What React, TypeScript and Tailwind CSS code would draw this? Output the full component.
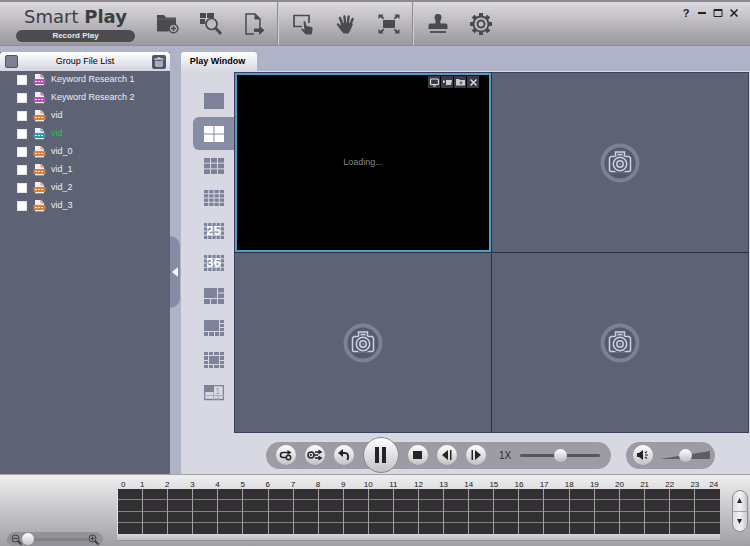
import React from "react";

const INK = "#4b4a4f";

type IconProps = { children: React.ReactNode; w?: number; h?: number; box?: string };

function Icon({ children, w = 24, h = 24, box }: IconProps) {
  return (
    <svg width={w} height={h} viewBox={box ?? `0 0 ${w} ${h}`} fill="none" aria-hidden="true" className="shrink-0">
      {children}
    </svg>
  );
}

const FolderAdd = () => (
  <Icon>
    <path d="M1 3h7l2 2.500h10v8.500a6 6 0 0 0-7.500 5.500H1z" fill={INK} />
    <path d="M1 7h19" stroke="#66656a" />
    <circle cx="17.500" cy="16.500" r="4.300" stroke={INK} strokeWidth="1.600" fill="#b5b4b8" />
    <path d="M17.500 14v5M15 16.500h5" stroke={INK} strokeWidth="1.600" />
  </Icon>
);

const GridSearch = () => (
  <Icon>
    <path d="M1 1h6v5H1zM8 1h7v5H8zM1 7h5v5H1z" fill={INK} />
    <circle cx="12.500" cy="12" r="5.500" stroke={INK} strokeWidth="1.700" fill="#bdbcc0" />
    <path d="M16.500 16l5.500 6" stroke={INK} strokeWidth="3" />
  </Icon>
);

const ExportFile = () => (
  <Icon>
    <path d="M18 14V7l-5-5H4v20h8" stroke={INK} strokeWidth="1.500" />
    <path d="M12.500 2v5.500H18z" fill={INK} />
    <path d="M12 16.500h5V13.500l5.500 4.800-5.500 4.700V20h-5z" fill={INK} />
  </Icon>
);

const SelectArea = () => (
  <Icon>
    <path d="M11 14.500H3v-11h15V11" stroke={INK} strokeWidth="1.700" />
    <path d="M12.500 9.500c1.200-.8 2 0 2.200 1l.7 3.500 5 1c1.300.3 1.300 1.500 1.100 3l-.8 4.500h-6L10.500 18c-.6-1 .8-1.800 1.700-1l1.300 1z" fill={INK} />
  </Icon>
);

const Hand = () => (
  <Icon>
    <g stroke={INK} strokeWidth="2.400" strokeLinecap="round">
      <path d="M8.500 13L6 6M11 12l-.5-7.500M13.500 12l1.200-7.500M16 13l2.700-6M8 17l-4-4.500" />
    </g>
    <path d="M7 11h10l2 1-2.500 6-2 3.500H9.500L4.500 15l2-1z" fill={INK} />
  </Icon>
);

const FullView = () => (
  <Icon>
    <path d="M6 8h12v8H6z" fill={INK} />
    <path d="M1.500 2.500h5L5.300 3.900 7.300 6 6 7.200 3.500 5.200 1.500 7zM22.500 2.500h-5l1.200 1.400-2 2.100L18 7.200l2.500-2 2 1.800zM1.500 21.500h5l-1.200-1.400L7.300 18 6 16.800l-2.500 2L1.500 17zM22.500 21.500h-5l1.200-1.400-2-2.100 1.300-1.200 2.500 2 2-1.800z" fill={INK} />
  </Icon>
);

const Stamp = () => (
  <Icon>
    <path d="M8.500 5C8.500 3 10 2 12 2s3.500 1 3.500 3c0 2.500-1.500 3-1 6.500h5c1.200 0 2 1 2 2V17h-19v-3.500c0-1 .8-2 2-2h5c.5-3.500-1-4-1-6.500z" fill={INK} />
    <path d="M4 20h16" stroke={INK} strokeWidth="1.800" />
  </Icon>
);

const Gear = () => (
  <Icon>
    <g stroke={INK} strokeWidth="4">
      <path d="M12 1v4M12 19v4M1 12h4M19 12h4M4.200 4.200L7 7M17 17l2.800 2.800M4.200 19.800L7 17M17 7l2.800-2.800" />
    </g>
    <circle cx="12" cy="12" r="7.500" stroke={INK} strokeWidth="1.900" fill="#bcbbbf" />
    <circle cx="12" cy="12" r="3.500" stroke={INK} strokeWidth="2" />
  </Icon>
);

const toolGroups = [
  [
    { name: "Add folder", icon: <FolderAdd /> },
    { name: "Search recordings", icon: <GridSearch /> },
    { name: "Export file", icon: <ExportFile /> },
  ],
  [
    { name: "Select area", icon: <SelectArea /> },
    { name: "Pan", icon: <Hand /> },
    { name: "Full view", icon: <FullView /> },
  ],
  [
    { name: "Watermark", icon: <Stamp /> },
    { name: "Settings", icon: <Gear /> },
  ],
];

const windowControls = [
  { name: "Help", icon: <span className="text-[11px] leading-3 font-bold">?</span> },
  { name: "Minimize", icon: <Icon w={10} h={10}><path d="M1 5h8" stroke="#222" strokeWidth="2" /></Icon> },
  { name: "Maximize", icon: <Icon w={10} h={10}><path d="M1 1.500h8v7H1z" stroke="#222" /><path d="M1 2h8" stroke="#222" strokeWidth="2" /></Icon> },
  { name: "Close", icon: <Icon w={10} h={10}><path d="M1.500 1.500l7 7M8.500 1.500l-7 7" stroke="#222" strokeWidth="1.600" /></Icon> },
];

function TitleBar() {
  return (
    <header className="flex h-[46px] shrink-0 items-center border-t-2 border-b border-t-[#8d8b91] border-b-[#918f97] bg-linear-to-b from-[#dcdade] to-[#9a989d]">
      <div className="ml-4 w-[119px] shrink-0">
        <h1 className="text-center font-['DejaVu_Sans',sans-serif] text-lg leading-[22px] whitespace-nowrap text-[#3e3d42]">
          Smart <b>Play</b>
        </h1>
        <p className="mt-[2px] h-3 rounded-full bg-[#4c4b50] text-center text-[8px] leading-3 font-bold text-[#e8e8ea]">Record Play</p>
      </div>
      <nav aria-label="Tools" className="ml-[11px] flex self-stretch">
        {toolGroups.map((group, i) => (
          <div key={i} className="flex">
            {i > 0 && <div className="mx-[2px] w-[2px] border-l border-[#8f8d92] bg-[#d0cfd3]" />}
            {group.map((tool) => (
              <button key={tool.name} type="button" aria-label={tool.name} className="flex w-[43px] items-center justify-center">
                {tool.icon}
              </button>
            ))}
          </div>
        ))}
      </nav>
      <div className="mr-2 mb-[22px] ml-auto flex text-[#222]">
        {windowControls.map((c) => (
          <button key={c.name} type="button" aria-label={c.name} className="flex h-4 w-4 items-center justify-center">
            {c.icon}
          </button>
        ))}
      </div>
    </header>
  );
}

const files = [
  { name: "Keyword Research 1", color: "#b452b4" },
  { name: "Keyword Research 2", color: "#b452b4" },
  { name: "vid", color: "#d98236" },
  { name: "vid", color: "#2c9ab4", active: true },
  { name: "vid_0", color: "#d98236" },
  { name: "vid_1", color: "#d98236" },
  { name: "vid_2", color: "#d98236" },
  { name: "vid_3", color: "#d98236" },
];

function FileIcon({ color }: { color: string }) {
  return (
    <Icon w={13} h={14}>
      <path d="M2 1h6l3 3v9H2z" fill="#f3eef3" />
      <path d="M8 1v3h3" stroke={color} />
      <path d="M0.500 6h12v5H.5z" fill={color} />
      <path d="M2 8.500h9" stroke="#f6e4f0" strokeDasharray="2 1" />
      <path d="M2 12.500h9" stroke={color} />
    </Icon>
  );
}

function FileList() {
  return (
    <aside className="mt-[6px] flex w-[170px] shrink-0 flex-col bg-[#5d6375]">
      <div className="flex h-[19px] items-center justify-between rounded-t-[3px] bg-linear-to-b from-white to-[#d3d4e0] pr-1 pl-[5px]">
        <input type="checkbox" aria-label="Select all files" className="h-[13px] w-[13px] appearance-none rounded-[2px] border border-[#4f5468] bg-[#7b8095]" />
        <h2 className="text-[9px] text-black">Group File List</h2>
        <button type="button" aria-label="Delete selected" className="flex h-[14px] w-[14px] items-center justify-center rounded-[2px] bg-[#4f5569]">
          <Icon w={10} h={10}>
            <path d="M.5 2h9M3.500 1h3" stroke="#fff" />
            <path d="M2 3.500v5.500h6V3.500M4 4v4M6 4v4" stroke="#fff" />
          </Icon>
        </button>
      </div>
      <ul>
        {files.map((f, i) => (
          <li key={i}>
            <label className="flex h-[18px] items-center pl-[17px] text-[9px]">
              <input type="checkbox" className="h-[10px] w-[10px] appearance-none border border-[#e4e6ec] bg-white" />
              <span className="mr-[5px] ml-[6px]">
                <FileIcon color={f.color} />
              </span>
              <span className={f.active ? "text-[#1fc83a]" : "text-[#eceef3]"}>{f.name}</span>
            </label>
          </li>
        ))}
      </ul>
    </aside>
  );
}

const CELL = "#7b829a";

function Cells({ cols, rows }: { cols: number; rows: number }) {
  const cw = (20 - (cols - 1)) / cols;
  const ch = (16 - (rows - 1)) / rows;
  return (
    <>
      {Array.from({ length: cols * rows }, (_, i) => (
        <rect key={i} x={(i % cols) * (cw + 1)} y={Math.floor(i / cols) * (ch + 1)} width={cw} height={ch} fill="currentColor" />
      ))}
    </>
  );
}

function CountCells({ n }: { n: number }) {
  return (
    <span className="relative flex items-center justify-center">
      <Icon w={20} h={16}>
        <Cells cols={5} rows={4} />
      </Icon>
      <span className="absolute text-[13px] leading-4 font-bold text-white">{n}</span>
    </span>
  );
}

const layouts = [
  { name: "1 window", icon: <Icon w={20} h={16}><Cells cols={1} rows={1} /></Icon> },
  { name: "4 windows", icon: <Icon w={20} h={16}><Cells cols={2} rows={2} /></Icon>, active: true },
  { name: "9 windows", icon: <Icon w={20} h={16}><Cells cols={3} rows={3} /></Icon> },
  { name: "16 windows", icon: <Icon w={20} h={16}><Cells cols={4} rows={4} /></Icon> },
  { name: "25 windows", icon: <CountCells n={25} /> },
  { name: "36 windows", icon: <CountCells n={36} /> },
  {
    name: "6 windows",
    icon: <Icon w={20} h={16}><path d="M0 0h13v10H0zM14 0h6v4.500h-6zM14 5.500h6V10h-6zM0 11h6v5H0zM7 11h6v5H7zM14 11h6v5h-6z" fill={CELL} /></Icon>,
  },
  {
    name: "8 windows",
    icon: <Icon w={20} h={16}><path d="M0 0h15v11H0zM16 0h4v3h-4zM16 4h4v3h-4zM16 8h4v3h-4zM0 12h4v4H0zM5 12h5v4H5zM11 12h4v4h-4zM16 12h4v4h-4z" fill={CELL} /></Icon>,
  },
  {
    name: "13 windows",
    icon: <Icon w={20} h={16}><path d="M0 0h4v3H0zM5 0h4v3H5zM10 0h5v3h-5zM16 0h4v3h-4zM0 4h4v4H0zM16 4h4v4h-4zM0 9h4v3H0zM16 9h4v3h-4zM0 13h4v3H0zM5 13h4v3H5zM10 13h5v3h-5zM16 13h4v3h-4zM5 4h10v8H5z" fill={CELL} /></Icon>,
  },
  {
    name: "Custom layout",
    icon: (
      <Icon w={20} h={16}>
        <path d="M.5.5h19v14H.5z" stroke={CELL} strokeWidth="1.500" />
        <path d="M0 10.500h20M9.500 7v8M14 10v5" stroke="#a9adbd" />
        <path d="M1 1h9v6H1z" fill={CELL} />
        <path d="M12 4l2-1v5M12 8.500h4" stroke="#a9adbd" />
      </Icon>
    ),
  },
];

function LayoutRail() {
  return (
    <div className="flex w-[53px] shrink-0 flex-col bg-[#d8d8e3] pt-[13px]">
      <div className="flex h-[324px] flex-col">
        {layouts.map((l) => (
          <button
            key={l.name}
            type="button"
            aria-label={l.name}
            className={`ml-3 flex flex-1 items-center justify-center rounded-l-md ${l.active ? "bg-[#868da5] text-white" : "text-[#7b829a]"}`}
          >
            {l.icon}
          </button>
        ))}
      </div>
    </div>
  );
}

function EmptyCell() {
  return (
    <div className="flex items-center justify-center bg-[#5d6375]">
      <Icon w={40} h={40}>
        <circle cx="20" cy="20" r="17.500" fill="#555b6e" stroke="#7b8196" strokeWidth="4" />
        <g stroke="#cdd2e2" strokeWidth="1.500" fill="#555b6e">
          <path d="M15.500 14V9h9v5" />
          <path d="M11 13.500h18l1.500 1.500v12.500l-1 1h-19l-1-1V15z" />
          <circle cx="20" cy="21" r="7.800" stroke="#555b6e" strokeWidth="2" />
          <circle cx="20" cy="21" r="6.700" />
          <circle cx="20" cy="21" r="3.200" />
        </g>
        <path d="M17.500 11.500h5" stroke="#cdd2e2" strokeWidth="1.500" />
        <circle cx="20" cy="21" r="1" fill="#8f96ac" />
      </Icon>
    </div>
  );
}

const cellActions = [
  { name: "Display", icon: <><rect x="1.500" y="2" width="8" height="5.500" rx="1" stroke="#ddd" strokeWidth="1.200" /><path d="M4 9h3" stroke="#ddd" /></> },
  { name: "Record", icon: <><path d="M4 3h6l-1 5H4z" fill="#ccc" /><path d="M1 3l2 1v1.500L1 6z" fill="#ccc" /></> },
  { name: "Snapshot", icon: <><path d="M1 2h3l1 1h5v5.500H1z" fill="#ccc" /><circle cx="6" cy="5.700" r="1.300" fill="#555" /></> },
  { name: "Close cell", icon: <path d="M2.500 2.500l6 6M8.500 2.500l-6 6" stroke="#ddd" strokeWidth="1.400" /> },
];

function VideoGrid() {
  return (
    <div className="grid min-w-0 flex-1 grid-cols-2 grid-rows-2 gap-px border border-[#39415a] bg-[#2b3040]">
      <div className="relative flex items-center justify-center border-2 border-[#4d9fc8] bg-black">
        <p className="text-[9px] text-[#85868b]">Loading...</p>
        <div className="absolute top-px right-[10px] flex gap-px">
          {cellActions.map((a) => (
            <button key={a.name} type="button" aria-label={a.name} className="flex h-3 w-3 items-center justify-center bg-[#3a3a46]">
              <Icon w={11} h={11}>{a.icon}</Icon>
            </button>
          ))}
        </div>
      </div>
      <EmptyCell />
      <EmptyCell />
      <EmptyCell />
    </div>
  );
}

const DARK = "#242428";

function RoundButton({ name, children, large }: { name: string; children: React.ReactNode; large?: boolean }) {
  return (
    <button
      type="button"
      aria-label={name}
      className={`flex shrink-0 items-center justify-center rounded-full bg-linear-to-b from-white to-[#c3c2c8] ${large ? "-my-1 h-9 w-9 border border-[#88878d]" : "h-5 w-5"}`}
    >
      {children}
    </button>
  );
}

function PlayerControls() {
  return (
    <div className="flex h-[41px] shrink-0 items-center justify-center gap-[15px] bg-[#d8d8e2] pb-px pt-1 pl-[50px]">
      <div className="flex h-[27px] items-center gap-[9px] rounded-full bg-[#9d9ba3] pr-[11px] pl-[10px]">
        <RoundButton name="Repeat">
          <Icon w={14} h={14}>
            <path d="M7 9.500H4a2.500 2.500 0 0 1 0-5h6" stroke={DARK} strokeWidth="1.600" />
            <path d="M8.500 2l4 2.500-4 2.500z" fill={DARK} />
            <circle cx="9.500" cy="9.500" r="2.200" stroke={DARK} strokeWidth="1.400" />
          </Icon>
        </RoundButton>
        <RoundButton name="Sync play">
          <Icon w={16} h={14}>
            <circle cx="4" cy="7" r="3" stroke={DARK} strokeWidth="1.500" />
            <path d="M3 5.500L5.500 7 3 8.500zM11.500 1.500l4 2.500-4 2.500zM11.500 7.500l4 2.500-4 2.500z" fill={DARK} />
            <path d="M8 4h4M8 10h4M7 7h4" stroke={DARK} strokeWidth="1.500" />
          </Icon>
        </RoundButton>
        <RoundButton name="Reverse play">
          <Icon w={14} h={14}>
            <path d="M5 5h3c3 0 4 3 2.500 7" stroke={DARK} strokeWidth="2" />
            <path d="M1 5l5-4v8z" fill={DARK} />
          </Icon>
        </RoundButton>
        <RoundButton name="Pause" large>
          <Icon w={13} h={16}>
            <path d="M1 0h4v16H1zM8 0h4v16H8z" fill={DARK} />
          </Icon>
        </RoundButton>
        <RoundButton name="Stop">
          <Icon w={9} h={8}>
            <path d="M0 0h9v8H0z" fill={DARK} />
          </Icon>
        </RoundButton>
        <RoundButton name="Previous frame">
          <Icon w={12} h={10}>
            <path d="M7 0v10L1 5zM9 0h1.500v10H9z" fill={DARK} />
          </Icon>
        </RoundButton>
        <RoundButton name="Next frame">
          <Icon w={12} h={10}>
            <path d="M5 0v10l6-5zM1.500 0H3v10H1.500z" fill={DARK} />
          </Icon>
        </RoundButton>
        <label htmlFor="speed" className="ml-1 text-[10px] text-[#2c2b30]">
          1X
        </label>
        <input
          id="speed"
          type="range"
          defaultValue={50}
          className="h-[3px] w-20 appearance-none rounded-full bg-[#57565d] [&::-webkit-slider-thumb]:h-[13px] [&::-webkit-slider-thumb]:w-[13px] [&::-webkit-slider-thumb]:appearance-none [&::-webkit-slider-thumb]:rounded-full [&::-webkit-slider-thumb]:bg-linear-to-b [&::-webkit-slider-thumb]:from-white [&::-webkit-slider-thumb]:to-[#bcbbc2]"
        />
      </div>
      <div className="flex h-[27px] items-center gap-[7px] rounded-full bg-[#9d9ba3] pr-[5px] pl-[7px]">
        <RoundButton name="Mute">
          <Icon w={14} h={12}>
            <path d="M1 4h2l4-3v10L3 8H1z" fill={DARK} />
            <path d="M9 4l2-1.500M9 6h3M9 8l2 1.500" stroke={DARK} strokeWidth="1.200" />
          </Icon>
        </RoundButton>
        <div className="relative flex items-center">
          <Icon w={50} h={10}>
            <path d="M0 9L50 1v8z" fill="#5f5d66" />
          </Icon>
          <input
            type="range"
            aria-label="Volume"
            defaultValue={52}
            className="absolute inset-0 w-full appearance-none bg-transparent [&::-webkit-slider-thumb]:h-[13px] [&::-webkit-slider-thumb]:w-[13px] [&::-webkit-slider-thumb]:appearance-none [&::-webkit-slider-thumb]:rounded-full [&::-webkit-slider-thumb]:bg-linear-to-b [&::-webkit-slider-thumb]:from-white [&::-webkit-slider-thumb]:to-[#bcbbc2]"
          />
        </div>
      </div>
    </div>
  );
}

function ZoomIcon({ plus }: { plus?: boolean }) {
  return (
    <Icon w={11} h={11}>
      <circle cx="4.500" cy="4.500" r="3.500" stroke="#3a393e" />
      <path d={plus ? "M2.500 4.500h4M4.500 2.500v4" : "M2.500 4.500h4"} stroke="#3a393e" />
      <path d="M7 7l3.500 3.500" stroke="#3a393e" strokeWidth="1.800" />
    </Icon>
  );
}

const hours = Array.from({ length: 25 }, (_, i) => i);

function Timeline() {
  return (
    <footer className="flex h-[72px] shrink-0 border-t border-[#a3a2a8] bg-linear-to-b from-[#efeff0] to-[#a09fa4]">
      <div className="flex w-[117px] shrink-0 items-end">
        <div className="ml-[7px] flex h-[14px] w-24 items-center rounded-t-lg rounded-b-md bg-[#939298] px-1">
          <ZoomIcon />
          <input
            type="range"
            aria-label="Timeline zoom"
            defaultValue={0}
            className="h-[3px] min-w-0 flex-1 appearance-none bg-[#828188] [&::-webkit-slider-thumb]:h-3 [&::-webkit-slider-thumb]:w-3 [&::-webkit-slider-thumb]:appearance-none [&::-webkit-slider-thumb]:rounded-full [&::-webkit-slider-thumb]:bg-linear-to-b [&::-webkit-slider-thumb]:from-white [&::-webkit-slider-thumb]:to-[#c6c5cb]"
          />
          <ZoomIcon plus />
        </div>
      </div>
      <div className="flex min-w-0 flex-1 flex-col">
        <div className="mt-[5px] grid h-[9px] grid-cols-48 text-center text-[8px] leading-[10px] text-[#151515]">
          {hours.map((h) => (
            <span key={h} className={h === 0 || h === 24 ? "col-span-1" : "col-span-2"}>
              {h}
            </span>
          ))}
        </div>
        <div className="grid h-[45px] grid-cols-24 grid-rows-4 border-l border-[#e3e3e3] bg-[#323032]">
          {Array.from({ length: 96 }, (_, i) => (
            <div
              key={i}
              className={`${i % 24 < 23 ? "border-r border-r-[#a3a2a3]" : ""} ${i < 72 ? "border-b border-b-[#858485]" : ""}`}
            />
          ))}
        </div>
        <div className="h-[7px] border-b border-[#98979c] bg-linear-to-b from-[#d8d7da] to-[#bdbcc0]" />
      </div>
      <div className="flex w-[30px] shrink-0 justify-center pt-[15px] pl-[11px]">
        <div className="mr-[2px] flex h-[42px] w-4 flex-col overflow-hidden rounded-full border border-[#8d8c92] bg-linear-to-r from-[#dddce0] via-[#f4f4f6] to-[#c9c8cd]">
          <button type="button" aria-label="Scroll up" className="flex flex-1 items-center justify-center border-b border-[#a5a4aa]">
            <Icon w={5} h={5}><path d="M2.500 0L5 5H0z" fill={DARK} /></Icon>
          </button>
          <button type="button" aria-label="Scroll down" className="flex flex-1 items-center justify-center">
            <Icon w={5} h={5}><path d="M2.500 5L5 0H0z" fill={DARK} /></Icon>
          </button>
        </div>
      </div>
    </footer>
  );
}

export default function App() {
  return (
    <div className="flex h-screen flex-col overflow-hidden bg-[#aeb3c7] font-['Liberation_Sans',Arial,sans-serif]">
      <TitleBar />
      <main className="flex min-h-0 flex-1">
        <FileList />
        <div className="flex w-[11px] shrink-0 items-center pt-[24px]">
          <button type="button" aria-label="Collapse file list" className="flex h-[72px] w-[10px] items-center justify-center rounded-r-[10px] bg-[#868ca3]">
            <Icon w={6} h={10}><path d="M6 0v10L0 5z" fill="#f4f5fa" /></Icon>
          </button>
        </div>
        <section className="flex min-w-0 flex-1 flex-col pt-[6px]">
          <div className="flex h-[19px] shrink-0" role="tablist">
            <button type="button" role="tab" aria-selected="true" className="w-[76px] rounded-t-[3px] bg-linear-to-b from-white to-[#d8d8e3] pr-[3px] text-[9px] font-bold text-black">
              Play Window
            </button>
          </div>
          <div className="flex min-h-0 flex-1 border-t border-[#d8dcec] bg-[#d8d8e3] pr-px">
            <LayoutRail />
            <VideoGrid />
          </div>
          <PlayerControls />
        </section>
      </main>
      <Timeline />
    </div>
  );
}
